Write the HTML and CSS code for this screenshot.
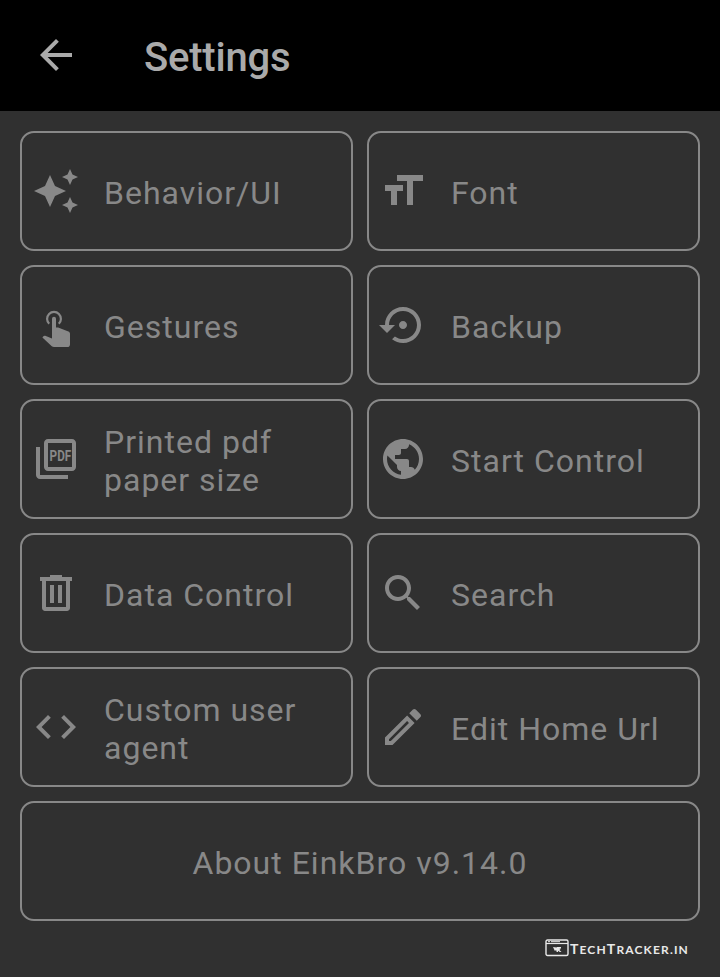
FILE: index.html
```html
<!DOCTYPE html>
<html lang="en">
<head>
<meta charset="utf-8">
<title>Settings</title>
<link rel="stylesheet" href="styles.css">
</head>
<body>
<header class="bar">
  <svg class="icon" viewBox="0 0 24 24"><path d="M20 11H7.83l5.59-5.59L12 4l-8 8 8 8 1.41-1.41L7.83 13H20v-2z"/></svg>
  <h1 class="title">Settings</h1>
</header>
<main class="grid">
  <a class="card"><svg class="icon" viewBox="0 0 24 24"><path d="M19 9l1.25-2.75L23 5l-2.75-1.25L19 1l-1.25 2.75L15 5l2.75 1.25L19 9zm-7.5.5L9 4 6.5 9.5 1 12l5.5 2.5L9 20l2.5-5.5L17 12l-5.5-2.5zM19 15l-1.25 2.75L15 19l2.75 1.25L19 23l1.25-2.75L23 19l-2.75-1.25L19 15z"/></svg><span class="label">Behavior/UI</span></a>
  <a class="card"><svg class="icon" viewBox="0 0 24 24"><path d="M9 4v3h5v12h3V7h5V4H9zm-6 8h3v7h3v-7h3V9H3v3z"/></svg><span class="label">Font</span></a>
  <a class="card"><svg class="icon" viewBox="0 0 24 24"><path d="M8.6 11.4A3.45 3.45 0 1 1 13.4 11.4" fill="none" stroke="currentColor" stroke-width="1.1"/><path d="M10 8.9a1 1 0 0 1 2 0V13.3h.8c.2 0 .4 0 .6.1l4.8 1.9c.5.2.8.6.8 1.1v5.3c0 .8-.6 1.3-1.3 1.3H11c-.4 0-.8-.2-1.1-.4L5.2 18.2l.5-.6c.2-.2.5-.3.9-.2L10 18.7z"/></svg><span class="label">Gestures</span></a>
  <a class="card"><svg class="icon" viewBox="0 0 24 24"><path d="M14 12c0-1.1-.9-2-2-2s-2 .9-2 2 .9 2 2 2 2-.9 2-2zm-2-9c-4.97 0-9 4.03-9 9H0l4 4 4-4H5c0-3.87 3.13-7 7-7s7 3.13 7 7-3.13 7-7 7c-1.51 0-2.91-.49-4.06-1.3l-1.42 1.44C8.04 20.3 9.94 21 12 21c4.97 0 9-4.03 9-9s-4.03-9-9-9z"/></svg><span class="label">Backup</span></a>
  <a class="card"><svg class="icon" viewBox="0 0 24 24"><path d="M20 2H8c-1.1 0-2 .9-2 2v12c0 1.100.9 2 2 2h12c1.100 0 2-.9 2-2V4c0-1.100-.9-2-2-2zm0 14H8V4h12v12zM4 6H2v14c0 1.100.9 2 2 2h14v-2H4V6z"/><text class="pdf" x="8.800" y="13" textLength="10.800" lengthAdjust="spacingAndGlyphs">PDF</text></svg><span class="label">Printed pdf paper size</span></a>
  <a class="card"><svg class="icon" viewBox="0 0 24 24"><path d="M12 2C6.480 2 2 6.480 2 12s4.480 10 10 10 10-4.480 10-10S17.520 2 12 2zm-1 17.930c-3.950-.49-7-3.850-7-7.930 0-.62.08-1.210.21-1.790L9 15v1c0 1.100.9 2 2 2v1.930zm6.900-2.540c-.26-.81-1-1.390-1.900-1.390h-1v-3c0-.55-.45-1-1-1H8v-2h2c.55 0 1-.45 1-1V7h2c1.100 0 2-.9 2-2v-.41c2.930 1.190 5 4.060 5 7.410 0 2.080-.8 3.970-2.100 5.390z"/></svg><span class="label">Start Control</span></a>
  <a class="card"><svg class="icon" viewBox="0 0 24 24"><path fill-rule="evenodd" d="M9 3h6v1h5v2h-1v13.500c0 .8-.7 1.500-1.500 1.500h-11c-.8 0-1.500-.7-1.500-1.500V6H4V4h5zM7 6v13h10V6zM9 8h2v9H9zM13 8h2v9h-2z"/></svg><span class="label">Data Control</span></a>
  <a class="card"><svg class="icon" viewBox="0 0 24 24"><path d="M15.500 14h-.79l-.28-.27C15.410 12.590 16 11.110 16 9.500 16 5.910 13.090 3 9.500 3S3 5.910 3 9.500 5.910 16 9.500 16c1.610 0 3.090-.59 4.230-1.570l.27.28v.79l5 4.990L20.490 19l-4.990-5zm-6 0C7.010 14 5 11.990 5 9.500S7.010 5 9.500 5 14 7.010 14 9.500 11.990 14 9.500 14z"/></svg><span class="label">Search</span></a>
  <a class="card"><svg class="icon" viewBox="0 0 24 24"><path d="M9.400 16.600L4.800 12l4.600-4.600L8 6l-6 6 6 6 1.400-1.400zm5.200 0l4.600-4.600-4.600-4.600L16 6l6 6-6 6-1.400-1.400z"/></svg><span class="label">Custom user agent</span></a>
  <a class="card"><svg class="icon" viewBox="0 0 24 24"><path d="M14.060 9.020l.92.92L5.920 19H5v-.92l9.060-9.060M17.660 3c-.25 0-.51.1-.7.29l-1.830 1.830 3.750 3.750 1.830-1.830c.39-.39.39-1.020 0-1.410l-2.340-2.340c-.2-.2-.45-.29-.71-.29zm-3.600 3.190L3 17.250V21h3.750L17.810 9.940l-3.750-3.750z"/></svg><span class="label">Edit Home Url</span></a>
  <a class="card wide"><span class="about">About EinkBro v9.14.0</span></a>
</main>
<footer class="mark">
  <svg class="logo" viewBox="0 0 24 18"><rect x="1" y="1" width="22" height="15.500" rx="1.500" fill="none" stroke="currentColor" stroke-width="1.400"/><path d="M1 4.500h22" stroke="currentColor" stroke-width="1.200"/><path d="M3 2.700h2M6 2.700h9" stroke="currentColor" stroke-width="1"/><path d="M8 8l3.500.4.500-.4h4v1.200h-2l2 .6-1.600 1.200L16.500 13h-1.800l-1.500-1.200-.3 1.200h-1.200l-.6-2-1.200 1z"/></svg>
  <span class="brand">T<small>ECH</small>T<small>RACKER.IN</small></span>
</footer>
</body>
</html>
```
FILE: styles.css
```css
* { box-sizing: border-box; }
body {
  margin: 0;
  height: 977px;
  overflow: hidden;
  background: #303030;
  color: #888;
  font-family: Roboto, sans-serif;
}
.bar {
  display: flex;
  align-items: center;
  gap: 64px;
  height: 111px;
  padding: 0 32px;
  background: #000;
  color: #aaa;
}
.bar .icon { margin-bottom: 1px; }
.title { margin: 5px 0 0; font-size: 40px; font-weight: 500; line-height: 48px; letter-spacing: -.2px; }
.icon { flex: none; display: block; width: 48px; height: 48px; fill: currentColor; }
.grid {
  display: grid;
  grid-template-columns: 1fr 1fr;
  grid-auto-rows: 120px;
  gap: 14px;
  padding: 20px 20px 0;
}
.card {
  display: flex;
  align-items: center;
  gap: 24px;
  padding: 0 10px;
  border: 2px solid #888;
  border-radius: 14px;
}
.label, .about { padding-top: 4px; font-size: 32px; line-height: 38px; letter-spacing: 1px; }
.wide { grid-column: 1 / -1; justify-content: center; }
.pdf { font: 700 7px Roboto, sans-serif; }
.mark {
  display: flex;
  align-items: center;
  justify-content: flex-end;
  gap: 1px;
  height: 20px;
  margin-top: 17px;
  padding-right: 31px;
  color: #e8e8e8;
}
.logo { width: 24px; height: 18px; fill: currentColor; }
.brand { padding-top: 2px; font: 700 14px/20px Lato, sans-serif; letter-spacing: 1.15px; }
.brand small { font-size: 12px; }
```
